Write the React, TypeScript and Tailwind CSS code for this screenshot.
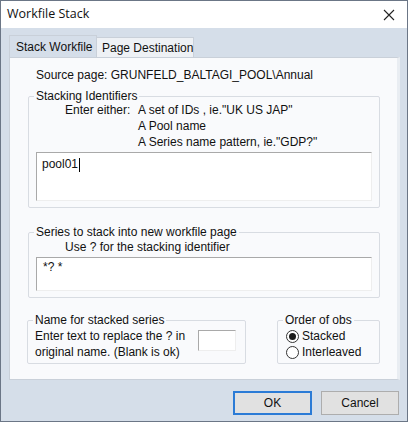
import React from 'react';

// Radio button drawn as a circle, the selected one gets a dot
const Radio: React.FC<{ checked: boolean; label: string }> = ({ checked, label }) => (
  <div className="flex items-center h-[16px]">
    <span className="w-[13px] h-[13px] rounded-full border border-[#333333] bg-white flex items-center justify-center">
      {checked && <span className="w-[7px] h-[7px] rounded-full bg-[#1a1a1a]" />}
    </span>
    <span className="ml-[3px]">{label}</span>
  </div>
);

const App: React.FC = () => {
  return (
    <div
      className="w-[408px] h-[422px] border border-[#6b7686] flex flex-col text-[12px] text-[#111111] bg-[#d5dee9]"
      style={{ fontFamily: '"Liberation Sans", Arial, sans-serif' }}
    >
      {/* Barra de título */}
      <div className="h-[27px] bg-white flex items-center justify-between pl-[6px] pr-[12px]">
        <span className="text-[12.5px]" style={{ fontFamily: '"Open Sans", sans-serif' }}>
          Workfile Stack
        </span>
        <svg width="12" height="12" viewBox="0 0 12 12">
          <path d="M1 1 L11 11 M11 1 L1 11" stroke="#222" strokeWidth="1.1" />
        </svg>
      </div>

      <div className="flex-1 flex flex-col pl-[8px] pr-[7px]">
        {/* Abas */}
        <div className="flex items-end h-[22px] mt-[7px]">
          <div className="h-[22px] w-[88px] border border-b-0 border-[#c9d0d9] pl-[6px] flex items-center whitespace-nowrap">
            Stack Workfile
          </div>
          <div className="h-[20px] w-[97px] border border-l-0 border-b-0 border-[#c9d0d9] bg-[#eef1f5] pl-[5px] flex items-center whitespace-nowrap">
            Page Destination
          </div>
        </div>

        {/* Painel da aba */}
        <div className="h-[323px] border border-[#c9d0d9] border-r-[3px] border-r-[#e9edf2] bg-[#f9fafc] pl-[18px] pt-[9px]">
          <div className="leading-[16px] ml-[8px]">Source page: GRUNFELD_BALTAGI_POOL\Annual</div>

          <fieldset className="w-[352px] border border-[#d8dce2] rounded-[2px] px-[7px] pb-[6px] mt-[6px]">
            <legend className="ml-[-2px] px-[2px] leading-[14px]">Stacking Identifiers</legend>
            <div className="flex leading-[16px] ml-[29px] -mt-[1px]">
              <div className="w-[73px]">Enter either:</div>
              <div className="flex flex-col">
                <span>A set of IDs , ie."UK US JAP"</span>
                <span>A Pool name</span>
                <span>A Series name pattern, ie."GDP?"</span>
              </div>
            </div>
            <div className="h-[49px] mt-[2px] bg-white border border-[#a9a9a9] border-r-[#eeeeee] border-b-[#eeeeee] pl-[5px] pt-[3px] leading-[16px]">
              pool01<span className="inline-block w-px h-[14px] bg-black align-middle ml-[1px]" />
            </div>
          </fieldset>

          <fieldset className="w-[352px] border border-[#d8dce2] rounded-[2px] px-[7px] pb-[6px] mt-[17px]">
            <legend className="ml-[-2px] px-[2px] leading-[14px]">Series to stack into new workfile page</legend>
            <div className="leading-[16px] ml-[29px]">Use ? for the stacking identifier</div>
            <div className="h-[34px] mt-[2px] bg-white border border-[#a9a9a9] border-r-[#eeeeee] border-b-[#eeeeee] pl-[6px] pt-[1px] leading-[16px]">
              *? *
            </div>
          </fieldset>

          <div className="flex items-start mt-[15px]">
            <fieldset className="w-[219px] h-[51px] border border-[#d8dce2] rounded-[2px] px-[7px] -ml-[1px]">
              <legend className="ml-[-2px] px-[2px] leading-[14px]">Name for stacked series</legend>
              <div className="flex items-start mt-[1px]">
                <div className="leading-[16px] w-[163px]">
                  <div>Enter text to replace the ? in</div>
                  <div>original name. (Blank is ok)</div>
                </div>
                <div className="w-[38px] h-[21px] mt-[2px] bg-white border border-[#a9a9a9] border-r-[#eeeeee] border-b-[#eeeeee]" />
              </div>
            </fieldset>

            <fieldset className="w-[103px] h-[51px] border border-[#d8dce2] rounded-[2px] px-[7px] ml-[31px]">
              <legend className="ml-[-2px] px-[2px] leading-[14px]">Order of obs</legend>
              <div className="mt-[1px] ml-[1px]">
                <Radio checked label="Stacked" />
                <Radio checked={false} label="Interleaved" />
              </div>
            </fieldset>
          </div>
        </div>

        {/* Botões */}
        <div className="flex justify-end gap-[9px] mt-[11px] pr-[1px]">
          <button className="w-[79px] h-[24px] bg-[#e1e1e1] border-2 border-[#2b7bd6] text-[12px]">OK</button>
          <button className="w-[78px] h-[24px] bg-[#e1e1e1] border border-[#adadad] text-[12px]">Cancel</button>
        </div>
      </div>
    </div>
  );
};

export default App;
